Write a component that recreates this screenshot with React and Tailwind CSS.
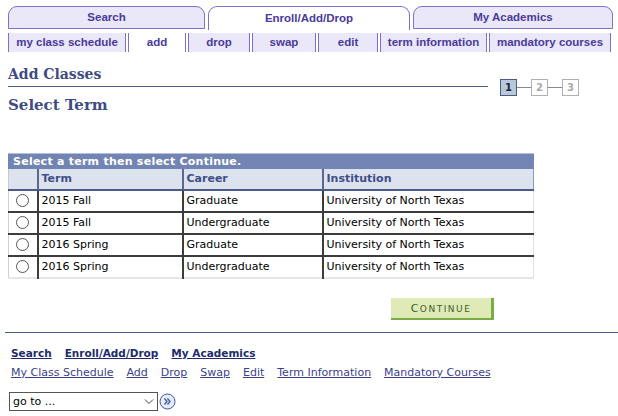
import { useState } from "react";

const topTabs = [
  { label: "Search", w: "w-[197px]" },
  { label: "Enroll/Add/Drop", w: "w-[202px]", active: true },
  { label: "My Academics", w: "w-[200px]" },
];

const subTabs = [
  { label: "my class schedule", w: "w-[118px]" },
  { label: "add", w: "w-[58px]", active: true },
  { label: "drop", w: "w-[62px]" },
  { label: "swap", w: "w-[64px]" },
  { label: "edit", w: "w-[60px]" },
  { label: "term information", w: "w-[107px]" },
  { label: "mandatory courses", w: "w-[122px]" },
];

const rows = [
  { term: "2015 Fall", career: "Graduate" },
  { term: "2015 Fall", career: "Undergraduate" },
  { term: "2016 Spring", career: "Graduate" },
  { term: "2016 Spring", career: "Undergraduate" },
];

const footerLinks = [
  "My Class Schedule",
  "Add",
  "Drop",
  "Swap",
  "Edit",
  "Term Information",
  "Mandatory Courses",
];

function StepBox({ n, active }) {
  return (
    <div
      className={
        active
          ? "w-[17px] h-[17px] border border-[#4b5a86] bg-[#b9c9dc] text-[#223] text-[10px] font-bold flex items-center justify-center leading-none"
          : "w-[17px] h-[17px] border border-[#b0b0b0] bg-white text-[#a8a8a8] text-[10px] font-bold flex items-center justify-center leading-none"
      }
    >
      {n}
    </div>
  );
}

function App() {
  const [selected, setSelected] = useState(null);

  return (
    <div className="min-h-screen bg-white font-['DejaVu_Sans',sans-serif] text-[11px] text-black">
      {/* top tabs */}
      <div className="flex gap-[3px] pl-[8px] pt-[6px] h-[30px] font-['Liberation_Sans',Arial,sans-serif]">
        {topTabs.map((t) => (
          <div
            key={t.label}
            className={
              t.active
                ? `${t.w} h-[24px] rounded-t-[9px] border border-b-0 border-[#7d72c9] bg-white text-[#4a3a9c] text-[11.5px] font-bold flex items-center justify-center pt-[1px]`
                : `${t.w} h-[23px] rounded-t-[9px] border border-[#7d72c9] bg-[#e9e7f8] text-[#4a3a9c] text-[11.5px] font-bold flex items-center justify-center pt-[1px]`
            }
          >
            {t.label}
          </div>
        ))}
      </div>

      {/* sub tabs */}
      <div className="flex gap-[2px] pl-[8px] mt-[3px] font-['Liberation_Sans',Arial,sans-serif]">
        {subTabs.map((t) => (
          <div
            key={t.label}
            className={`${t.w} h-[19px] border-x border-[#7d72c9] ${
              t.active ? "bg-white" : "bg-[#e9e7f8]"
            } text-[#4a3a9c] text-[11.5px] font-bold flex items-center justify-center`}
          >
            {t.label}
          </div>
        ))}
      </div>

      {/* page title + steps */}
      <div className="flex items-end pl-[8px] mt-[13px]">
        <div className="w-[480px] border-b border-[#4b5a86] pb-[3px]">
          <h1 className="font-['DejaVu_Serif',Georgia,serif] font-bold text-[14px] text-[#3f4c84] leading-[18px]">
            Add Classes
          </h1>
        </div>
        <div className="flex items-center ml-[12px] mb-[-9px]">
          <StepBox n="1" active />
          <div className="w-[14px] h-px bg-[#888]" />
          <StepBox n="2" />
          <div className="w-[14px] h-px bg-[#888]" />
          <StepBox n="3" />
        </div>
      </div>

      <h2 className="pl-[8px] mt-[8px] font-['DejaVu_Serif',Georgia,serif] font-bold text-[15px] text-[#3f4c84] leading-[20px]">
        Select Term
      </h2>

      {/* term table */}
      <div className="ml-[8px] mt-[38px] w-[526px]">
        <div className="h-[16px] bg-[#7284b4] border-t border-[#b6bfd8] text-white font-bold text-[11px] tracking-[0.25px] leading-[15px] pl-[5px]">
          Select a term then select Continue.
        </div>
        <table className="w-full border-collapse">
          <thead>
            <tr className="h-[21px] bg-[#dce3ee]">
              <th className="w-[29px] border-b-2 border-[#4b5a86] border-l border-l-[#c5cbd8]"></th>
              <th className="w-[145px] text-left font-bold text-[#3f4f88] pl-[3px] border-l-2 border-l-[#5b6890] border-b-2 border-b-[#4b5a86]">
                Term
              </th>
              <th className="w-[140px] text-left font-bold text-[#3f4f88] pl-[3px] border-l-2 border-l-[#5b6890] border-b-2 border-b-[#4b5a86]">
                Career
              </th>
              <th className="text-left font-bold text-[#3f4f88] pl-[3px] border-l-2 border-l-[#5b6890] border-b-2 border-b-[#4b5a86] border-r border-r-[#8b98bd]">
                Institution
              </th>
            </tr>
          </thead>
          <tbody>
            {rows.map((r, i) => (
              <tr
                key={i}
                className={
                  i < rows.length - 1
                    ? "h-[22px] border-b-2 border-[#3c3c3c]"
                    : "h-[22px] border-b-2 border-[#e6e6e6]"
                }
              >
                <td className="border-l border-l-[#cfcfcf] text-center align-middle">
                  <button
                    type="button"
                    onClick={() => setSelected(i)}
                    className="w-[13px] h-[13px] rounded-full border border-[#555] bg-white inline-flex items-center justify-center align-middle"
                  >
                    {selected === i && (
                      <span className="w-[5px] h-[5px] rounded-full bg-[#333]" />
                    )}
                  </button>
                </td>
                <td className="pl-[3px] border-l-2 border-l-[#3c3c3c]">
                  {r.term}
                </td>
                <td className="pl-[3px] border-l-2 border-l-[#3c3c3c]">
                  {r.career}
                </td>
                <td className="pl-[3px] border-l-2 border-l-[#3c3c3c] border-r border-r-[#e0e0e0]">
                  University of North Texas
                </td>
              </tr>
            ))}
          </tbody>
        </table>
      </div>

      {/* continue */}
      <div className="pl-[391px] mt-[19px]">
        <button
          type="button"
          className="w-[103px] h-[22px] bg-[#dfeab7] border-r-[3px] border-b-2 border-[#78ad45] text-[#3e5f2a] text-[11px] tracking-[1.5px] font-['DejaVu_Sans',sans-serif] leading-none"
        >
          C<span className="text-[9px]">ONTINUE</span>
        </button>
      </div>

      {/* footer */}
      <div className="ml-[5px] mt-[12px] border-t border-[#4b5a86]" />
      <div className="pl-[11px] mt-[13px] flex gap-[13px] font-bold text-[10.5px] text-[#1d2c6b]">
        <a href="#" className="underline">Search</a>
        <a href="#" className="underline">Enroll/Add/Drop</a>
        <a href="#" className="underline">My Academics</a>
      </div>
      <div className="pl-[11px] mt-[3px] flex gap-[13px] text-[#3c3f8a]">
        {footerLinks.map((l) => (
          <a key={l} href="#" className="underline">
            {l}
          </a>
        ))}
      </div>
      <div className="pl-[9px] mt-[11px] flex items-center gap-[1px]">
        <div className="w-[149px] h-[19px] border border-[#555] flex items-center justify-between px-[3px] text-[11px]">
          <span>go to ...</span>
          <svg width="10" height="7" viewBox="0 0 10 7" fill="none" stroke="#444" strokeWidth="1">
            <path d="M1 1.5 L5 5.5 L9 1.5" />
          </svg>
        </div>
        <svg width="17" height="17" viewBox="0 0 17 17">
          <circle cx="8.5" cy="8.5" r="7.5" fill="#e8ecf6" stroke="#3d55a8" strokeWidth="1" />
          <path d="M5.5 5.5 L8 8.5 L5.5 11.5 M8.5 5.5 L11 8.5 L8.5 11.5" fill="none" stroke="#3d55a8" strokeWidth="1.3" />
        </svg>
      </div>
    </div>
  );
}

export default App;
